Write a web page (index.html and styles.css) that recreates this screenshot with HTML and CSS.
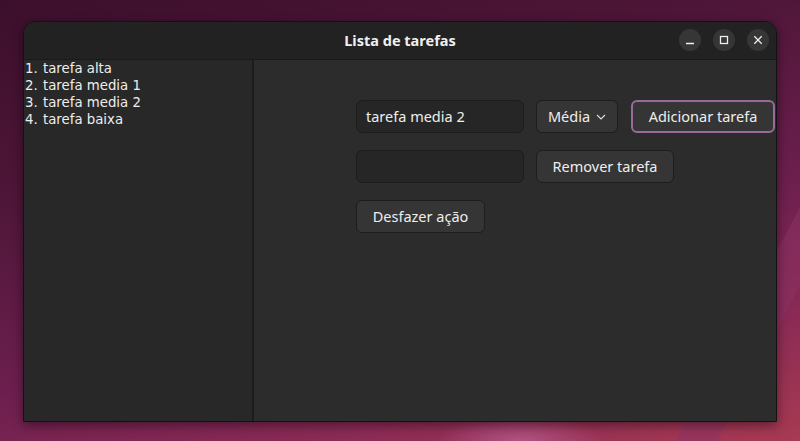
FILE: index.html
```html
<!DOCTYPE html>
<html lang="pt">
<head>
<meta charset="utf-8">
<title>Lista de tarefas</title>
<link rel="stylesheet" href="styles.css">
</head>
<body>
<div class="desktop">
  <div class="window">
    <header class="titlebar">
      <span class="title">Lista de tarefas</span>
      <div class="controls">
        <span class="ctl">
          <svg width="12" height="12" viewBox="0 0 12 12"><path d="M2 9.5h8" stroke="#eee" stroke-width="1.3" fill="none"/></svg>
        </span>
        <span class="ctl">
          <svg width="12" height="12" viewBox="0 0 12 12"><rect x="2.5" y="2.5" width="7" height="7" stroke="#eee" stroke-width="1.3" fill="none"/></svg>
        </span>
        <span class="ctl">
          <svg width="12" height="12" viewBox="0 0 12 12"><path d="M2.3 2.3l7.4 7.4M9.7 2.3l-7.4 7.4" stroke="#eee" stroke-width="1.3" fill="none"/></svg>
        </span>
      </div>
    </header>
    <div class="content">
      <aside class="sidebar">
        <ol class="tasks">
          <li><span class="num">1.</span>tarefa alta</li>
          <li><span class="num">2.</span>tarefa media 1</li>
          <li><span class="num">3.</span>tarefa media 2</li>
          <li><span class="num">4.</span>tarefa baixa</li>
        </ol>
      </aside>
      <main class="panel">
        <div class="row">
          <div class="entry entry-wide">tarefa media 2</div>
          <div class="btn dropdown">Média
            <svg width="10" height="6" viewBox="0 0 10 6"><path d="M1 1l4 4 4-4" stroke="#ddd" stroke-width="1.1" fill="none"/></svg>
          </div>
          <div class="btn btn-add focused">Adicionar tarefa</div>
        </div>
        <div class="row">
          <div class="entry entry-wide"></div>
          <div class="btn btn-remove">Remover tarefa</div>
        </div>
        <div class="row">
          <div class="btn btn-undo">Desfazer ação</div>
        </div>
      </main>
    </div>
  </div>
</div>
</body>
</html>
```
FILE: styles.css
```css
* { box-sizing: border-box; }
html, body {
  margin: 0;
  padding: 0;
  width: 800px;
  height: 441px;
  overflow: hidden;
}
body {
  font-family: "Noto Sans", "Open Sans", sans-serif;
  color: #eeeeee;
  background:
    linear-gradient(118deg, transparent 0 88%, rgba(140, 50, 100, 0.5) 88% 92%, transparent 92%),
    radial-gradient(ellipse 120px 40px at 520px 441px, rgba(200, 110, 170, 0.55), transparent 70%),
    linear-gradient(165deg, #3c0f2c 0%, #4e1638 30%, #6c1f4e 60%, #8a2a55 80%, #a83a52 100%);
}
.desktop {
  padding: 21px 0 0 23px;
}
.window {
  width: 754px;
  height: 401px;
  border: 1px solid #121212;
  border-radius: 12px 12px 0 0;
  overflow: hidden;
  display: flex;
  flex-direction: column;
  box-shadow: 0 3px 12px rgba(0, 0, 0, 0.45);
}
.titlebar {
  height: 38px;
  flex: none;
  background: #222222;
  border-bottom: 1px solid #1a1a1a;
  display: flex;
  align-items: center;
  justify-content: center;
  position: relative;
}
.title {
  font-weight: 700;
  font-size: 14.5px;
  color: #f0f0f0;
  margin-top: -1px;
}
.controls {
  position: absolute;
  right: 7px;
  top: 7px;
  display: flex;
  gap: 12px;
}
.ctl {
  width: 22px;
  height: 22px;
  border-radius: 50%;
  background: #363636;
  display: flex;
  align-items: center;
  justify-content: center;
}
.content {
  flex: 1;
  display: flex;
}
.sidebar {
  width: 230px;
  flex: none;
  background: #282828;
  border-right: 2px solid #1c1c1c;
}
.tasks {
  list-style: none;
  margin: 0;
  padding: 0 0 0 1px;
  font-family: "DejaVu Sans", "Noto Sans", sans-serif;
  font-size: 13.3px;
  line-height: 17px;
}
.tasks li {
  display: flex;
  height: 17px;
}
.num {
  width: 18px;
  flex: none;
}
.panel {
  flex: 1;
  background: #2c2c2c;
  padding: 40px 0 0 102px;
  display: flex;
  flex-direction: column;
  gap: 17px;
}
.row {
  display: flex;
  gap: 12px;
  height: 33px;
}
.entry {
  height: 33px;
  background: #262626;
  border: 1px solid #1d1d1d;
  border-radius: 6px;
  padding: 0 9px 2px;
  display: flex;
  align-items: center;
  font-size: 14.5px;
}
.entry-wide { width: 168px; }
.btn {
  height: 33px;
  background: #353535;
  border: 1px solid #1d1d1d;
  border-radius: 6px;
  padding-bottom: 2px;
  display: flex;
  align-items: center;
  justify-content: center;
  gap: 6px;
  font-size: 14.5px;
}
.btn svg { margin-top: 2px; }
.dropdown { width: 82px; }
.btn-add { width: 144px; margin-left: 1px; }
.focused {
  border: 2px solid #9a6a9a;
}
.btn-remove { width: 138px; }
.btn-undo { width: 129px; }
```
